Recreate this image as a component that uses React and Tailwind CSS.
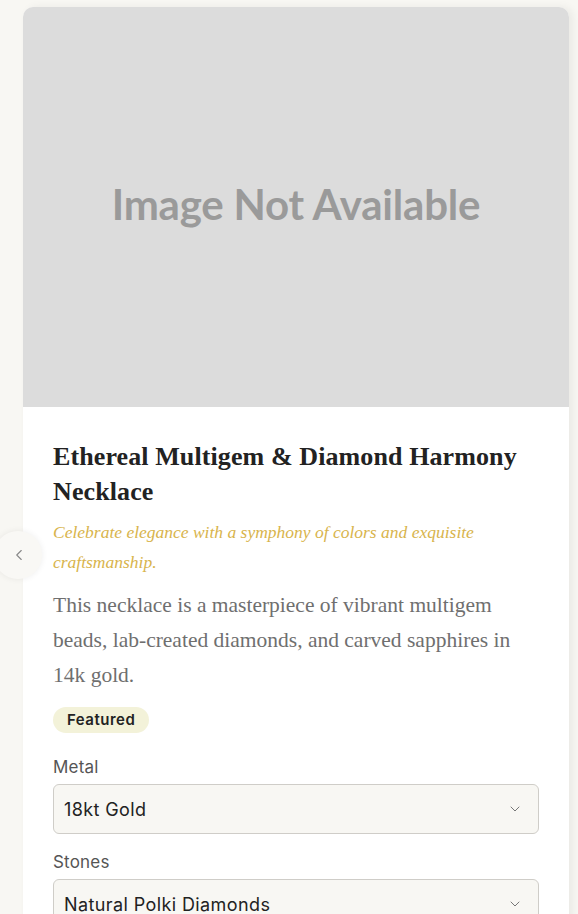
import { ChevronLeft, ChevronDown } from "lucide-react";

function Select({ label, value, last }) {
  return (
    <div className={last ? "" : "mb-[16px]"}>
      <label className="block text-[17px] leading-[24px] text-[#555] mb-[5px] tracking-[0.2px]" style={{ fontFamily: "Inter, 'Open Sans', sans-serif" }}>
        {label}
      </label>
      <div className="flex items-center justify-between h-[50px] px-[10px] border border-[#cfcdc8] rounded-[6px] bg-[#f8f7f3]">
        <span className="text-[18px] text-[#222] tracking-[0.4px]" style={{ fontFamily: "Inter, 'Open Sans', sans-serif" }}>{value}</span>
        <ChevronDown size={16} strokeWidth={1.5} className="text-[#777] mr-[5px]" />
      </div>
    </div>
  );
}

export default function App() {
  return (
    <div className="h-screen bg-[#f8f7f3] relative overflow-hidden">
      <div className="pt-[7px] pl-[23px] pr-[9px]">
        <div className="bg-white rounded-t-[10px] overflow-hidden shadow-[4px_0_8px_rgba(0,0,0,0.06)]">
          {/* image placeholder */}
          <div className="h-[400px] bg-[#dcdcdc] flex items-center justify-center pb-[6px]">
            <span className="text-[42px] font-bold text-[#9a9a9a] tracking-[-0.2px]" style={{ fontFamily: "Lato, sans-serif" }}>
              Image Not Available
            </span>
          </div>

          <div className="px-[30px] pt-[32px] pb-[20px]">
            <h1 className="text-[26px] leading-[35px] font-bold text-[#222] tracking-[0.1px]" style={{ fontFamily: "'Liberation Serif', serif" }}>
              Ethereal Multigem &amp; Diamond Harmony Necklace
            </h1>
            <p className="mt-[8px] text-[17.5px] leading-[30px] italic text-[#d8b44c]" style={{ fontFamily: "'Liberation Serif', serif" }}>
              Celebrate elegance with a symphony of colors and exquisite craftsmanship.
            </p>
            <p className="mt-[11px] text-[21.5px] leading-[35px] text-[#6f6f6f]" style={{ fontFamily: "'Liberation Serif', serif" }}>
              This necklace is a masterpiece of vibrant multigem beads, lab-created diamonds, and carved sapphires in 14k gold.
            </p>
            <div className="mt-[14px] mb-[22px]">
              <span className="inline-block px-[14px] py-[3px] rounded-full bg-[#f3f2d9] text-[15px] leading-[20px] font-semibold text-[#222] tracking-[0.5px]" style={{ fontFamily: "Inter, sans-serif" }}>
                Featured
              </span>
            </div>
            <Select label="Metal" value="18kt Gold" />
            <Select label="Stones" value="Natural Polki Diamonds" last />
          </div>
        </div>
      </div>

      {/* carousel arrow */}
      <button className="absolute left-[-6px] top-[531px] w-[48px] h-[48px] rounded-full bg-[#f9f8f5] shadow-[0_0_6px_rgba(0,0,0,0.07)] flex items-center justify-center">
        <ChevronLeft size={18} strokeWidth={1.5} className="text-[#888] ml-[2px]" />
      </button>
    </div>
  );
}
